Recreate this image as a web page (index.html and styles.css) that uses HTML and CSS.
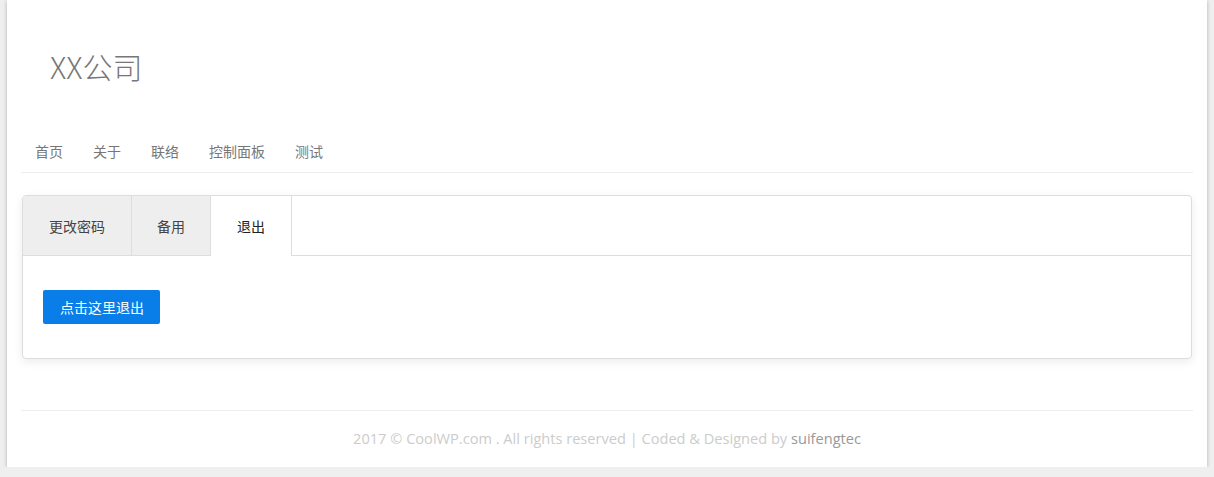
FILE: index.html
```html
<!DOCTYPE html>
<html lang="zh-CN">
<head>
<meta charset="utf-8">
<title>XX公司</title>
<link rel="stylesheet" href="styles.css">
</head>
<body>
<div class="page">
  <header class="header">
    <h1 class="logo">XX公司</h1>
    <nav class="nav">
      <a href="#">首页</a>
      <a href="#">关于</a>
      <a href="#">联络</a>
      <a href="#">控制面板</a>
      <a href="#">测试</a>
    </nav>
  </header>
  <section class="card">
    <div class="tabs">
      <div class="tab">更改密码</div>
      <div class="tab">备用</div>
      <div class="tab active">退出</div>
    </div>
    <div class="tab-body">
      <a class="btn" href="#">点击这里退出</a>
    </div>
  </section>
  <footer class="footer">
    2017 © CoolWP.com . All rights reserved | Coded &amp; Designed by <a href="#">suifengtec</a>
  </footer>
</div>
</body>
</html>
```
FILE: styles.css
```css
html, body {
  margin: 0;
  padding: 0;
}
body {
  background: #efefef;
  font-family: "Noto Sans CJK SC", "Noto Sans", sans-serif;
  font-size: 14px;
  color: #444;
}
.page {
  width: 1200px;
  margin: 0 auto;
  background: #fff;
  padding: 0 14px;
  box-sizing: border-box;
  box-shadow: 0 1px 4px rgba(0,0,0,0.25);
}
.header {
  display: flex;
  flex-direction: column;
}
.logo {
  margin: 0;
  padding: 51px 0 0 29px;
  font-size: 30px;
  line-height: 30px;
  font-weight: 300;
  color: #777;
}
.nav {
  display: flex;
  margin-top: 48px;
  border-bottom: 1px solid #eee;
}
.nav a {
  display: block;
  padding: 12px 15px 11px;
  line-height: 20px;
  color: #777;
  text-decoration: none;
}
.nav a:first-child {
  padding-left: 14px;
}
.card {
  margin: 22px 1px 0;
  border: 1px solid #ddd;
  border-radius: 4px;
  box-shadow: 0 3px 10px rgba(0,0,0,0.08);
  overflow: hidden;
}
.tabs {
  display: flex;
  height: 59px;
  border-bottom: 1px solid #ddd;
}
.tab {
  display: flex;
  align-items: center;
  padding: 0 26px;
  background: #eee;
  border-right: 1px solid #ddd;
  color: #444;
}
.tab:nth-child(2) {
  padding: 0 25px;
}
.tab.active {
  background: #fff;
  color: #222;
  margin-bottom: -1px;
  padding: 0 26px 0 26px;
}
.tab-body {
  padding: 34px 20px 34px;
}
.btn {
  display: inline-block;
  height: 34px;
  line-height: 34px;
  padding: 0 16px 0 17px;
  background: #0a7ee8;
  color: #fff;
  border-radius: 2px;
  text-decoration: none;
  vertical-align: top;
}
.footer {
  margin-top: 51px;
  border-top: 1px solid #eee;
  text-align: center;
  padding: 17px 0 18px;
  line-height: 21px;
  font-family: "Open Sans", "Noto Sans", sans-serif;
  font-size: 14.6px;
  color: #ccc;
}
.footer a {
  color: #999;
  text-decoration: none;
}
```
